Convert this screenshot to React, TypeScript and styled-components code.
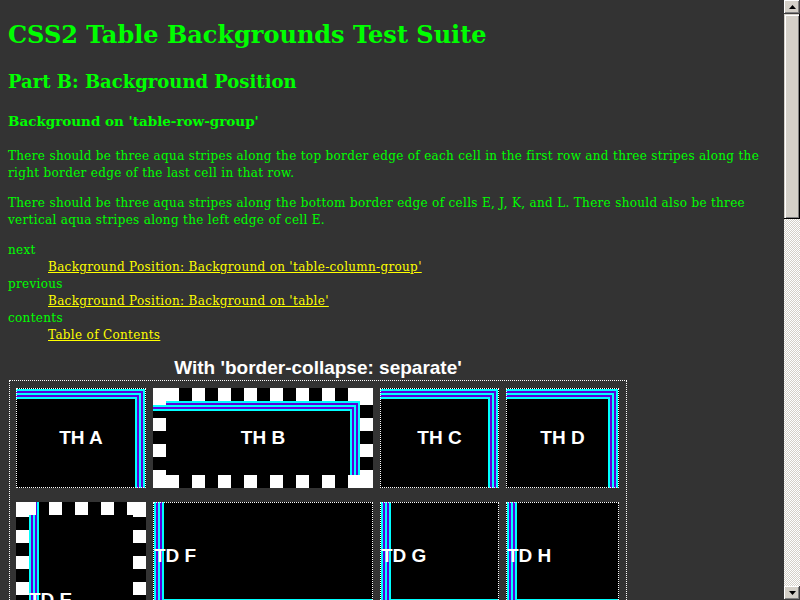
import styled, { createGlobalStyle } from 'styled-components';

const AQUA = '#00ffff';
const PURPLE = '#5a00dc';
const STRIPES = [AQUA, PURPLE, AQUA, PURPLE, AQUA];

const GlobalStyle = createGlobalStyle`
  html, body {
    margin: 0;
    height: 100%;
    overflow: hidden;
    background: #333;
  }
`;

// nested L of stripes, anchored at the padding-box corner of every cell
function stripeLayers(corner: 'tr' | 'bl') {
  const [h, v] = corner === 'tr' ? ['right', 'top'] : ['left', 'bottom'];
  const size = 'calc(100% + 40px) calc(100% + 40px) no-repeat padding-box border-box';
  const layers = [`linear-gradient(#000, #000) ${h} 10px ${v} 10px / ${size}`];
  for (let k = 4; k >= 0; k--) {
    const c = STRIPES[k];
    layers.push(`linear-gradient(${c}, ${c}) ${h} ${k * 2}px ${v} ${k * 2}px / ${size}`);
  }
  return layers;
}

// 13px dashed border drawn as square tiles (white corners, dashes at given phase)
function dashLayers(ox: number, oy: number) {
  const sq = 'linear-gradient(#fff, #fff)';
  return [
    `${sq} left top / 13px 13px no-repeat border-box`,
    `${sq} right top / 13px 13px no-repeat border-box`,
    `${sq} left bottom / 13px 13px no-repeat border-box`,
    `${sq} right bottom / 13px 13px no-repeat border-box`,
    `linear-gradient(90deg, #fff 13px, transparent 13px) ${ox}px 0 / 26px 13px repeat-x border-box`,
    `linear-gradient(90deg, #fff 13px, transparent 13px) ${ox}px 100% / 26px 13px repeat-x border-box`,
    `linear-gradient(180deg, #fff 13px, transparent 13px) 0 ${oy}px / 13px 26px repeat-y border-box`,
    `linear-gradient(180deg, #fff 13px, transparent 13px) 100% ${oy}px / 13px 26px repeat-y border-box`,
  ];
}

const Root = styled.div`
  display: flex;
  height: 100vh;
`;

const Page = styled.div`
  flex: 1;
  min-width: 0;
  overflow: hidden;
  padding: 0 8px;
  color: #00ff00;
  font-family: 'DejaVu Serif', 'Liberation Serif', serif;
  font-size: 12px;
  line-height: 17px;
  letter-spacing: 0.32px;
`;

const Title = styled.h1`
  margin: 21px 0 0;
  font-size: 24px;
  line-height: 28px;
  font-weight: bold;
  letter-spacing: 0;
`;

const PartTitle = styled.h2`
  margin: 22px 0 0;
  font-size: 18px;
  line-height: 21px;
  font-weight: bold;
  letter-spacing: 0;
`;

const TestTitle = styled.h3`
  margin: 21px 0 0;
  font-size: 13.5px;
  line-height: 16px;
  font-weight: bold;
  letter-spacing: 0;
`;

const Para = styled.p`
  margin: 13px 0 0;
  &:first-of-type {
    margin-top: 19px;
  }
`;

const Nav = styled.dl`
  margin: 13px 0 0;
  dt {
    margin: 0;
  }
  dd {
    margin: 0 0 0 40px;
  }
  a {
    color: #ffff00;
    text-decoration: underline;
  }
`;

const TableWrap = styled.div`
  margin: 13px 0 0 1px;
  width: fit-content;
`;

const Caption = styled.div`
  text-align: center;
  color: #fff;
  font: bold 19px/22px 'Liberation Sans', Arial, sans-serif;
  letter-spacing: 0;
  margin-bottom: 1px;
`;

const TableGrid = styled.div`
  display: grid;
  grid-template-columns: 130px 220px 119px 113px;
  grid-template-rows: 100px 108px 74px;
  column-gap: 7px;
  row-gap: 14px;
  padding: 7px 7px 7px 6px;
  border: 1px dotted #fff;
`;

type CellProps = {
  $corner: 'tr' | 'bl';
  $head?: boolean;
  $dash?: { x: number; y: number };
  $span?: number;
};

const Cell = styled.div<CellProps>`
  box-sizing: border-box;
  display: flex;
  align-items: center;
  justify-content: ${(p) => (p.$head ? 'center' : 'flex-start')};
  grid-row: ${(p) => (p.$span ? `span ${p.$span}` : 'auto')};
  border: ${(p) => (p.$dash ? '13px solid transparent' : '1px dotted #fff')};
  background: ${(p) =>
    [...(p.$dash ? dashLayers(p.$dash.x, p.$dash.y) : []), ...stripeLayers(p.$corner)].join(', ')};
  background-color: #000;
  color: #fff;
  font: bold 19px/22px 'Liberation Sans', Arial, sans-serif;
  letter-spacing: 0;
  white-space: nowrap;
`;

const ScrollBar = styled.div`
  width: 16px;
  flex: none;
  display: flex;
  flex-direction: column;
  background: repeating-conic-gradient(#d4d0c8 0 25%, #ffffff 0 50%) 0 0 / 2px 2px;
`;

const ArrowButton = styled.div`
  height: 14px;
  flex: none;
  display: flex;
  align-items: center;
  justify-content: center;
  background: #d4d0c8;
  box-shadow: inset -1px -1px #404040, inset 1px 1px #ffffff, inset -2px -2px #808080;
`;

const Thumb = styled.div`
  height: 205px;
  flex: none;
  background: #d4d0c8;
  box-shadow: inset -1px -1px #000, inset 1px 1px #d4d0c8, inset 2px 2px #ffffff, inset -2px -2px #808080;
`;

const Track = styled.div`
  flex: 1;
`;

function Arrow({ down }: { down?: boolean }) {
  return (
    <svg width="7" height="4" viewBox="0 0 7 4">
      <polygon points={down ? '0,0 7,0 3.5,4' : '0,4 7,4 3.5,0'} fill="#000" />
    </svg>
  );
}

export default function App() {
  return (
    <Root>
      <GlobalStyle />
      <Page>
        <Title>CSS2 Table Backgrounds Test Suite</Title>
        <PartTitle>Part B: Background Position</PartTitle>
        <TestTitle>Background on 'table-row-group'</TestTitle>
        <Para>
          There should be three aqua stripes along the top border edge of each cell in the first row and
          three stripes along the right border edge of the last cell in that row.
        </Para>
        <Para>
          There should be three aqua stripes along the bottom border edge of cells E, J, K, and L. There
          should also be three vertical aqua stripes along the left edge of cell E.
        </Para>
        <Nav>
          <dt>next</dt>
          <dd>
            <a href="#">Background Position: Background on 'table-column-group'</a>
          </dd>
          <dt>previous</dt>
          <dd>
            <a href="#">Background Position: Background on 'table'</a>
          </dd>
          <dt>contents</dt>
          <dd>
            <a href="#">Table of Contents</a>
          </dd>
        </Nav>
        <TableWrap>
          <Caption>With 'border-collapse: separate'</Caption>
          <TableGrid>
            <Cell $corner="tr" $head>TH A</Cell>
            <Cell $corner="tr" $head $dash={{ x: 13, y: 4 }}>TH B</Cell>
            <Cell $corner="tr" $head>TH C</Cell>
            <Cell $corner="tr" $head>TH D</Cell>
            <Cell $corner="bl" $span={2} $dash={{ x: 7, y: 2 }}>TD E</Cell>
            <Cell $corner="bl">TD F</Cell>
            <Cell $corner="bl">TD G</Cell>
            <Cell $corner="bl">TD H</Cell>
          </TableGrid>
        </TableWrap>
      </Page>
      <ScrollBar>
        <ArrowButton>
          <Arrow />
        </ArrowButton>
        <Thumb />
        <Track />
        <ArrowButton>
          <Arrow down />
        </ArrowButton>
      </ScrollBar>
    </Root>
  );
}
